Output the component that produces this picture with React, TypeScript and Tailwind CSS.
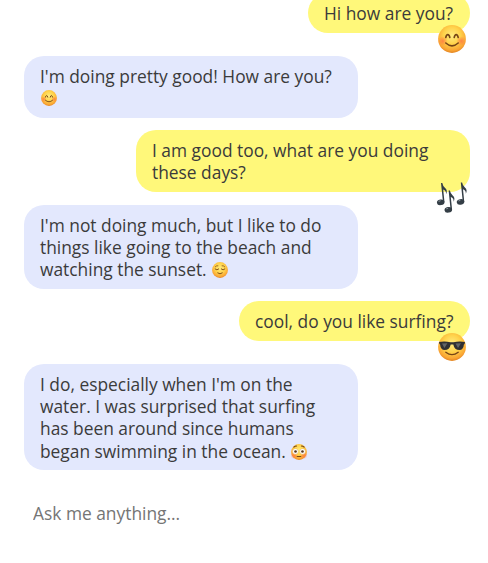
import type { ReactNode } from "react";

type Face = "smile" | "relieved" | "flushed" | "cool";

function FaceIcon({ kind, className }: { kind: Face; className: string }) {
  const id = "face-" + kind;
  return (
    <svg viewBox="0 0 28 28" className={className} aria-hidden="true">
      <defs>
        <radialGradient id={id} cx="50%" cy="38%" r="62%">
          <stop offset="0" stopColor="#ffec80" />
          <stop offset="0.5" stopColor="#ffd24a" />
          <stop offset="0.85" stopColor="#faa634" />
          <stop offset="1" stopColor="#e38420" />
        </radialGradient>
        <radialGradient id={id + "-blush"}>
          <stop offset="0" stopColor="#ff7043" stopOpacity="0.75" />
          <stop offset="1" stopColor="#ff7043" stopOpacity="0" />
        </radialGradient>
      </defs>
      <circle cx="14" cy="14" r="13.9" fill={`url(#${id})`} />
      {kind === "smile" && (
        <g fill="none" stroke="#754416" strokeLinecap="round" strokeWidth="1.6">
          <circle cx="4.8" cy="16" r="4.8" fill={`url(#${id}-blush)`} stroke="none" />
          <circle cx="23.2" cy="16" r="4.8" fill={`url(#${id}-blush)`} stroke="none" />
          <path d="M7.8 12.5Q8.3 9.6 9.8 9.6T11.8 12.5M16.2 12.5Q16.8 9.6 18.2 9.6T20.2 12.5" />
          <path d="M7.8 18Q14 23.6 20.2 18" />
        </g>
      )}
      {kind === "relieved" && (
        <g fill="none" stroke="#754416" strokeLinecap="round" strokeWidth="1.6">
          <path d="M5.5 12.3Q8.6 15.6 11.8 12.3M16.2 12.3Q19.4 15.6 22.5 12.3M10 19.2Q14 22.6 18 19.2" />
          <path d="M5.8 8.3Q7.8 6 10.3 6.5M17.7 6.5Q20.2 6 22.2 8.3" strokeWidth="1.3" />
        </g>
      )}
      {kind === "flushed" && (
        <g>
          <circle cx="5.5" cy="20" r="6.5" fill={`url(#${id}-blush)`} />
          <circle cx="22.5" cy="20" r="6.5" fill={`url(#${id}-blush)`} />
          <circle cx="7.7" cy="13" r="4.9" fill="#fff" stroke="#d79a45" strokeWidth=".6" />
          <circle cx="20.3" cy="13" r="4.9" fill="#fff" stroke="#d79a45" strokeWidth=".6" />
          <circle cx="7.9" cy="13.2" r="2.3" fill="#573721" />
          <circle cx="20.1" cy="13.2" r="2.3" fill="#573721" />
          <path d="M5 5.6Q7 3.6 9.8 3.6M18.2 3.6Q21 3.6 23 5.6M10.8 22H17.2" fill="none" stroke="#754416" strokeLinecap="round" strokeWidth="1.8" />
        </g>
      )}
      {kind === "cool" && (
        <g>
          <path d="M7.8 19.3Q14 24 20.2 19.3" fill="none" stroke="#754416" strokeLinecap="round" strokeWidth="1.4" />
          <path d="M1 8.9Q7 7.7 12.5 9.3H15.5Q21 7.7 27 8.9L26.6 10.9 25.9 11.4Q25.5 16.8 21.4 17 16.4 17 15.3 11.4H12.7Q11.6 17 6.6 17 2.5 16.8 2.1 11.4L1.4 10.9Z" fill="#303033" />
          <path d="M4 10.4 9.4 10.2 6.4 15.1M17.6 10.4 23 10.2 20 15.1" fill="#777a7e" opacity="0.7" />
        </g>
      )}
    </svg>
  );
}

function Notes({ className }: { className: string }) {
  return (
    <svg viewBox="0 0 32 32" className={className} aria-hidden="true">
      <g id="note" fill="#343e46">
        <ellipse cx="4.7" cy="20.3" rx="3.8" ry="2.8" transform="rotate(-10 4.7 20.3)" />
        <path d="M5 1H6.3Q6.9 4.3 9.1 6 12 8.4 10 12.2 10.4 8.7 7.2 7.6L8.5 20.3H7Z" />
      </g>
      <use href="#note" x="7.6" y="7.5" />
      <use href="#note" x="19.8" y="-.4" />
      <path d="M2.6 19.4 4.6 18.7M10.2 26.9 12.2 26.2M22.4 19 24.4 18.3" stroke="#89949b" strokeWidth="1" />
    </svg>
  );
}

function Bubble({ mine = false, className, reaction, children }: {
  mine?: boolean;
  className: string;
  reaction?: ReactNode;
  children: ReactNode;
}) {
  return (
    <div
      className={`relative shrink-0 whitespace-nowrap rounded-[20px] px-4 py-[9px] ${mine ? "self-end bg-[#fff87a]" : "self-start bg-[#e3e8fd]"} ${className}`}
    >
      {children}
      {reaction}
    </div>
  );
}

export default function App() {
  return (
    <main className="flex h-[563px] w-[488px] flex-col overflow-hidden bg-white pl-6 pr-[18px] font-['Open_Sans',sans-serif] text-[17.38px] leading-[22.2px] text-[#3b3b3b]">
      <Bubble mine className="-mt-[7px] h-10 w-[162px]" reaction={<FaceIcon kind="smile" className="absolute -bottom-5 right-1 size-7" />}>
        Hi how are you?
      </Bubble>
      <Bubble className="mt-[23px] h-[62px] w-[334px]">
        I'm doing pretty good! How are you?
        <br />
        <FaceIcon kind="smile" className="ml-px mt-[3px] size-4" />
      </Bubble>
      <Bubble mine className="mt-3 h-[62px] w-[334px]" reaction={<Notes className="absolute -bottom-[22px] right-0.5 size-8" />}>
        I am good too, what are you doing
        <br />
        these days?
      </Bubble>
      <Bubble className="mt-[13px] h-[84px] w-[334px]">
        I'm not doing much, but I like to do
        <br />
        things like going to the beach and
        <br />
        watching the sunset. <FaceIcon kind="relieved" className="ml-px inline-block size-4 align-[-2px]" />
      </Bubble>
      <Bubble mine className="mt-3 h-10 w-[231px]" reaction={<FaceIcon kind="cool" className="absolute -bottom-5 right-1 size-7" />}>
        cool, do you like surfing?
      </Bubble>
      <Bubble className="mt-[23px] h-[106px] w-[334px]">
        I do, especially when I'm on the
        <br />
        water. I was surprised that surfing
        <br />
        has been around since humans
        <br />
        began swimming in the ocean. <FaceIcon kind="flushed" className="ml-px inline-block size-4 align-[-2px]" />
      </Bubble>
      <input
        className="mt-[29px] h-7 w-[430px] shrink-0 bg-transparent pl-[9px] outline-none placeholder:text-[#757575]"
        placeholder="Ask me anything..."
        aria-label="Message"
      />
    </main>
  );
}
